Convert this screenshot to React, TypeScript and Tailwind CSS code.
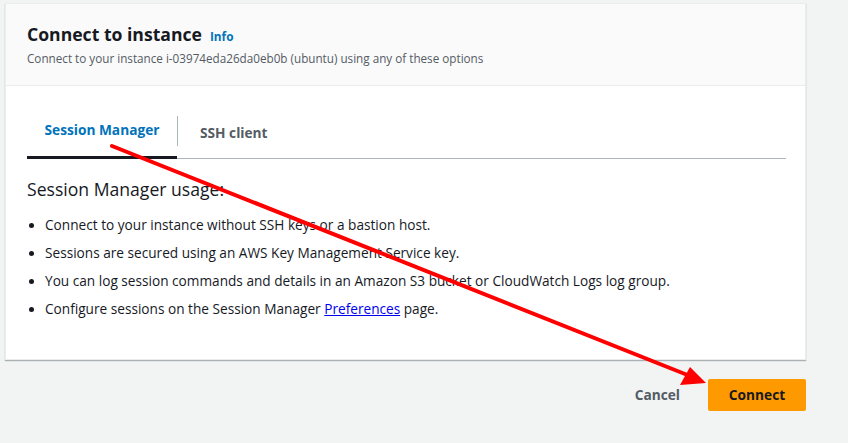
import React from 'react';

const bullets = [
  'Connect to your instance without SSH keys or a bastion host.',
  'Sessions are secured using an AWS Key Management Service key.',
  'You can log session commands and details in an Amazon S3 bucket or CloudWatch Logs log group.',
];

function Dot() {
  return (
    <span className="w-[18px] shrink-0 flex items-center h-[20px] pl-[2px]">
      <span className="w-[5px] h-[5px] rounded-full bg-[#16191f]" />
    </span>
  );
}

export default function App() {
  return (
    <div
      className="relative w-[848px] h-[443px] bg-[#f2f3f3] overflow-hidden"
      style={{ fontFamily: '"Open Sans", "Noto Sans", sans-serif' }}
    >
      <div className="pt-[3px] pl-[5px]">
        {/* Card */}
        <div className="w-[801px] bg-white border border-[#eaeded] shadow-[0_1px_1px_0_rgba(0,28,36,0.3)]">
          <div className="bg-[#fafafa] border-b border-[#eaeded] h-[82px] px-[21px] pt-[17px]">
            <div className="flex items-baseline gap-[8px]">
              <h1 className="text-[17.6px] leading-[26px] font-bold text-[#16191f]">Connect to instance</h1>
              <a className="text-[11.8px] font-bold text-[#0073bb]">Info</a>
            </div>
            <p className="text-[11.7px] leading-[16px] text-[#545b64] mt-[3px]">
              Connect to your instance i-03974eda26da0eb0b (ubuntu) using any of these options
            </p>
          </div>

          <div className="px-[21px] pt-[28px] pb-[40px]">
            {/* Tabs */}
            <div className="flex items-start border-b border-[#aab7b8] w-[759px] h-[45px]">
              <div className="relative w-[150px] h-[44px] pt-[6px] flex justify-center">
                <span className="text-[13.7px] leading-[20px] font-bold text-[#0073bb]">Session Manager</span>
                <div className="absolute left-0 right-0 bottom-[-1px] h-[3px] bg-[#16191f]" />
              </div>
              <div className="w-px h-[30px] bg-[#aab7b8] mt-[2px]" />
              <div className="pl-[22px] pt-[6px]">
                <span className="text-[13.7px] leading-[20px] font-bold text-[#545b64]">SSH client</span>
              </div>
            </div>

            <h2 className="mt-[19px] text-[17.6px] leading-[22px] text-[#16191f]">Session Manager usage:</h2>

            <ul className="mt-[15px] flex flex-col gap-[8px] text-[13.65px] leading-[20px] text-[#16191f]">
              {bullets.map((b) => (
                <li key={b} className="flex">
                  <Dot />
                  <span>{b}</span>
                </li>
              ))}
              <li className="flex">
                <Dot />
                <span>
                  Configure sessions on the Session Manager{' '}
                  <a className="text-[#0000ee] underline">Preferences</a> page.
                </span>
              </li>
            </ul>
          </div>
        </div>

        {/* Actions */}
        <div className="w-[801px] flex justify-end items-center mt-[19px] gap-[28px]">
          <button className="text-[13.7px] font-bold text-[#545b64]">Cancel</button>
          <button className="w-[98px] h-[32px] rounded-[2px] bg-[#ff9900] text-[13.7px] font-bold text-[#16191f]">
            Connect
          </button>
        </div>
      </div>

      {/* Red annotation arrow */}
      <svg className="absolute inset-0 pointer-events-none" width="848" height="443">
        <line x1="112" y1="146" x2="690" y2="376" stroke="#ff0000" strokeWidth="4" strokeLinecap="round" />
        <polygon points="706,383 680,385 690,367" fill="#ff0000" />
      </svg>
    </div>
  );
}
